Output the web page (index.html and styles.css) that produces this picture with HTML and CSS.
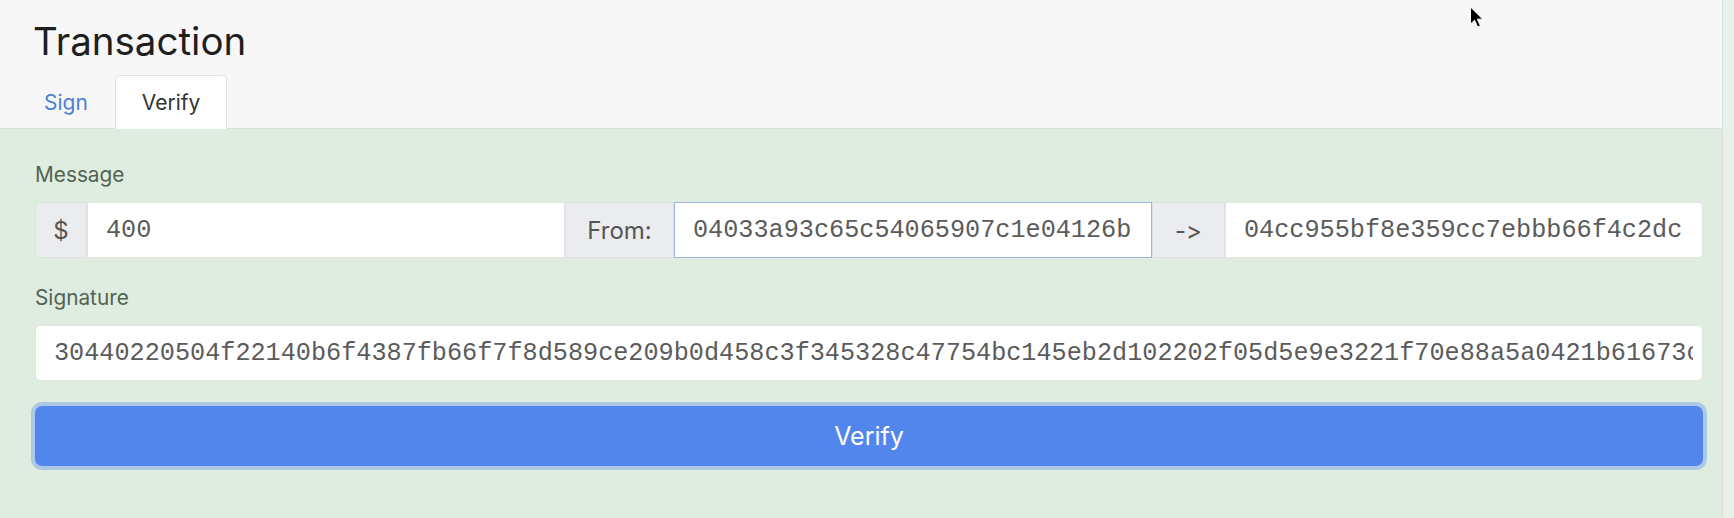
FILE: index.html
```html
<!DOCTYPE html>
<html lang="en">
<head>
<meta charset="utf-8">
<title>Transaction</title>
<link rel="stylesheet" href="styles.css">
</head>
<body>
<div class="page">
  <div class="card">
    <header class="card-header">
      <h1 class="title">Transaction</h1>
      <nav class="tabs">
        <a class="tab" href="#">Sign</a>
        <a class="tab tab-active" href="#">Verify</a>
      </nav>
    </header>
    <section class="card-body">
      <div class="form-group">
        <label class="label">Message</label>
        <div class="input-group">
          <span class="addon addon-first addon-dollar">$</span>
          <input class="field" type="text" value="400">
          <span class="addon addon-from">From:</span>
          <input class="field field-focus" type="text" value="04033a93c65c54065907c1e04126b">
          <span class="addon addon-arrow">-&gt;</span>
          <input class="field field-last" type="text" value="04cc955bf8e359cc7ebbb66f4c2dc">
        </div>
      </div>
      <div class="form-group">
        <label class="label">Signature</label>
        <input class="field field-full" type="text" value="30440220504f22140b6f4387fb66f7f8d589ce209b0d458c3f345328c47754bc145eb2d102202f05d5e9e3221f70e88a5a0421b61673c">
      </div>
      <button class="btn" type="button">Verify</button>
    </section>
  </div>
  <svg class="cursor" width="15" height="23" viewBox="0 0 15 23" aria-hidden="true">
    <path d="M1.5 1 L1.5 18 L5.6 14.2 L8.6 21 L11.4 19.8 L8.4 13.2 L13.8 13.2 Z" fill="#000" stroke="#fff" stroke-width="1" stroke-linejoin="round"/>
  </svg>
</div>
</body>
</html>
```

FILE: styles.css
```css
* {
  box-sizing: border-box;
}

html, body {
  margin: 0;
  padding: 0;
}

body {
  background: #e9efe9;
  font-family: Inter, "Noto Sans", "DejaVu Sans", sans-serif;
  color: #333;
}

.page {
  position: relative;
  display: flex;
  min-height: 518px;
}

.card {
  flex: 0 0 1723px;
  display: flex;
  flex-direction: column;
  border-right: 1px solid #dbe2db;
  background: #dfede0;
}

.card-header {
  background: #f7f7f7;
  border-bottom: 1px solid #dedede;
  padding-top: 19px;
}

.title {
  margin: 0;
  padding-left: 33px;
  font-size: 38.5px;
  line-height: 44px;
  font-weight: 400;
  color: #1f1f1f;
}

.tabs {
  display: flex;
  margin-top: 12px;
  margin-bottom: -1px;
  padding-left: 17px;
}

.tab {
  display: flex;
  align-items: center;
  height: 54px;
  padding: 0 26px;
  border: 1px solid transparent;
  border-bottom: none;
  border-radius: 5px 5px 0 0;
  font-size: 21px;
  color: #4d80d8;
  text-decoration: none;
}

.tab-active {
  background: #fff;
  border-color: #e2e2e2;
  color: #333;
}

.card-body {
  flex: 1;
  padding: 31px 19px 40px 35px;
}

.form-group {
  margin-bottom: 25px;
}

.label {
  display: block;
  margin-bottom: 12px;
  font-size: 20.8px;
  line-height: 30px;
  color: #526352;
}

.input-group {
  display: flex;
  height: 56px;
}

.addon {
  display: flex;
  align-items: center;
  justify-content: center;
  flex: 0 0 auto;
  background: #ebecef;
  border: 1px solid #dde2e0;
  font-size: 24px;
  color: #555;
  font-feature-settings: "calt" 0;
  font-variant-ligatures: none;
}

.addon-first {
  border-radius: 5px 0 0 5px;
}

.addon-dollar {
  width: 52px;
}

.addon-from {
  width: 109px;
}

.addon-arrow {
  width: 73px;
}

.field {
  flex: 1 1 0;
  min-width: 0;
  height: 56px;
  margin: 0;
  padding: 0 14px 0 18px;
  border: 1px solid #e1e6e1;
  background: #fff;
  font-family: "Liberation Mono", "DejaVu Sans Mono", monospace;
  font-size: 25.2px;
  color: #5b5b5b;
  outline: none;
}

.field-focus {
  border-color: #9db4e4;
}

.field-last {
  border-radius: 0 5px 5px 0;
}

.field-full {
  display: block;
  width: 100%;
  padding-right: 9px;
  border-radius: 5px;
}

.btn {
  display: block;
  width: 100%;
  height: 60px;
  margin: 2px 0 0;
  border: none;
  border-radius: 7px;
  background: #5286ec;
  box-shadow: 0 0 0 4px rgba(82, 134, 236, 0.35);
  font-family: Inter, "Noto Sans", "DejaVu Sans", sans-serif;
  font-size: 25px;
  color: #fff;
  cursor: pointer;
}

.cursor {
  position: absolute;
  left: 1469px;
  top: 6px;
}
```
